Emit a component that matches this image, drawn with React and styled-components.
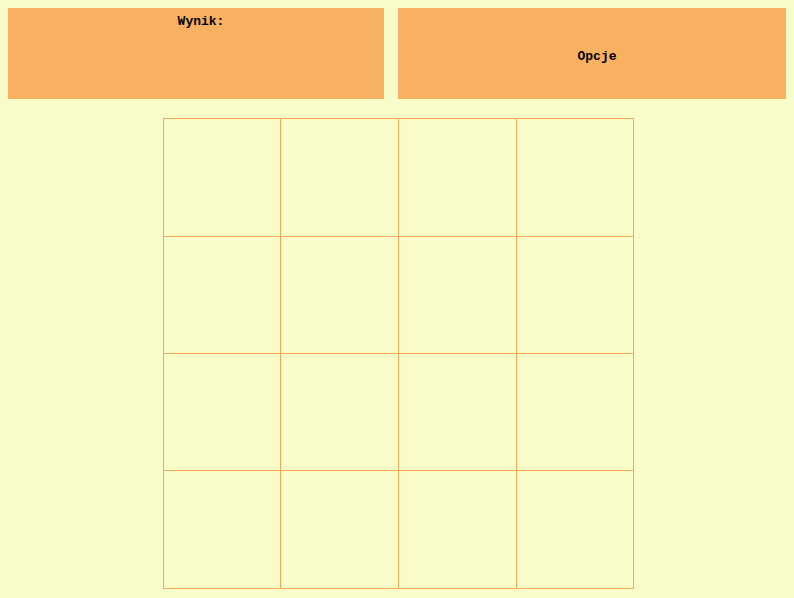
import React from 'react';
import styled, { createGlobalStyle } from 'styled-components';

const GlobalStyle = createGlobalStyle`
    html, body {
        margin: 0;
        padding: 0;
        background: #f9fbc8;
    }
    body {
        font-family: "Liberation Mono", "DejaVu Sans Mono", monospace;
        -webkit-font-smoothing: none;
    }
`;

const Page = styled.div`
    width: 794px;
    height: 598px;
    overflow: hidden;
`;

const TopBar = styled.div`
    display: flex;
    gap: 14px;
    padding: 8px 8px 0 8px;
`;

const Panel = styled.div`
    width: ${p => p.$width}px;
    height: 91px;
    box-sizing: border-box;
    background: #f8b061;
    display: flex;
    justify-content: center;
    align-items: ${p => (p.$middle ? 'center' : 'flex-start')};
    padding: 6px 0 0 10px;
`;

const Label = styled.span`
    font-size: 13px;
    font-weight: bold;
    line-height: 15px;
    color: #000;
`;

const Board = styled.div`
    margin: 19px 0 0 163px;
    width: 471px;
    height: 471px;
    box-sizing: border-box;
    display: grid;
    grid-template-columns: 117px 118px 118px 117px;
    grid-template-rows: 118px 117px 117px 118px;
    border-top: 1px solid #f8a958;
    border-left: 1px solid #f8a958;
`;

const Cell = styled.div`
    border-right: 1px solid #f8a958;
    border-bottom: 1px solid #f8a958;
`;

export default function App() {
    const cells = [];
    for (let i = 0; i < 16; i++) {
        cells.push(<Cell key={i} />);
    }

    return (
        <Page>
            <GlobalStyle />
            <TopBar>
                <Panel $width={376}>
                    <Label>Wynik:</Label>
                </Panel>
                <Panel $width={388} $middle>
                    <Label>Opcje</Label>
                </Panel>
            </TopBar>
            <Board>{cells}</Board>
        </Page>
    );
}
